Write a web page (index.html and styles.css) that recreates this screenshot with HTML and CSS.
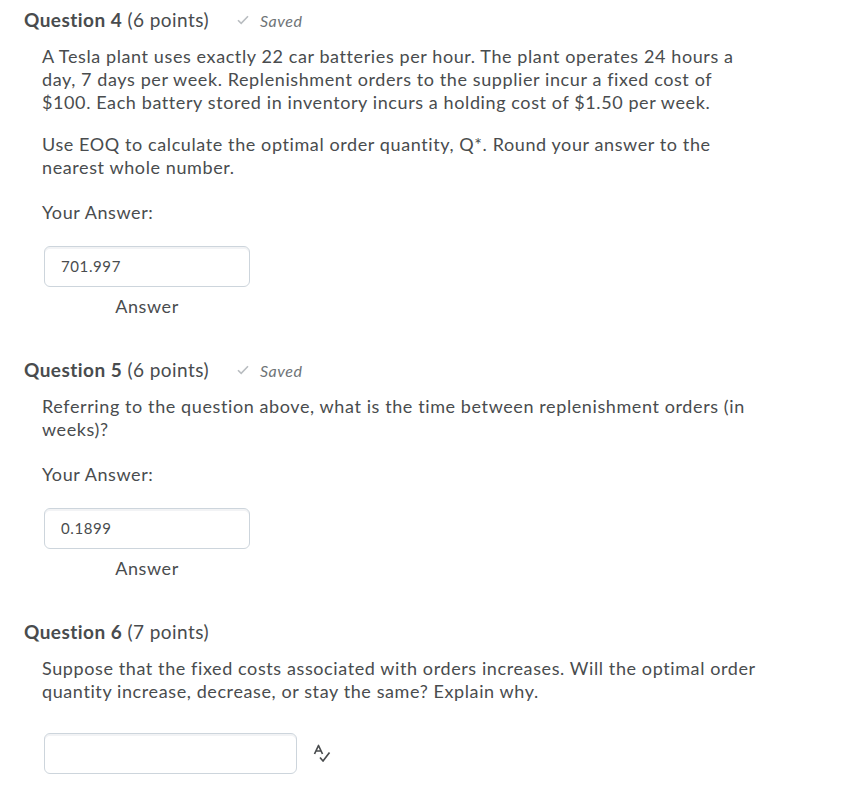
FILE: index.html
```html
<!DOCTYPE html>
<html>
<head>
<meta charset="utf-8">
<link rel="stylesheet" href="styles.css">
</head>
<body>
<div class="page">
  <section class="question">
    <div class="q-head">
      <h2 class="q-title"><strong>Question 4</strong> (6 points)</h2>
      <span class="saved"><svg class="check" viewBox="0 0 12 10" width="12" height="10"><path d="M1 5.2 L4.2 8.4 L11 1.2" fill="none" stroke="#b9bdc1" stroke-width="1.6"/></svg><em>Saved</em></span>
    </div>
    <div class="q-body">
      <p class="first">A Tesla plant uses exactly 22 car batteries per hour. The plant operates 24 hours a day, 7 days per week. Replenishment orders to the supplier incur a fixed cost of $100. Each battery stored in inventory incurs a holding cost of $1.50 per week.</p>
      <p>Use EOQ to calculate the optimal order quantity, Q*. Round your answer to the nearest whole number.</p>
      <p class="your">Your Answer:</p>
      <div class="answer-field">
        <div class="input">701.997</div>
        <div class="answer-label">Answer</div>
      </div>
    </div>
  </section>

  <section class="question">
    <div class="q-head">
      <h2 class="q-title"><strong>Question 5</strong> (6 points)</h2>
      <span class="saved"><svg class="check" viewBox="0 0 12 10" width="12" height="10"><path d="M1 5.2 L4.2 8.4 L11 1.2" fill="none" stroke="#b9bdc1" stroke-width="1.6"/></svg><em>Saved</em></span>
    </div>
    <div class="q-body">
      <p class="first">Referring to the question above, what is the time between replenishment orders (in weeks)?</p>
      <p class="your">Your Answer:</p>
      <div class="answer-field">
        <div class="input">0.1899</div>
        <div class="answer-label">Answer</div>
      </div>
    </div>
  </section>

  <section class="question">
    <div class="q-head">
      <h2 class="q-title"><strong>Question 6</strong> (7 points)</h2>
    </div>
    <div class="q-body">
      <p class="first">Suppose that the fixed costs associated with orders increases. Will the optimal order quantity increase, decrease, or stay the same? Explain why.</p>
      <div class="essay-row">
        <div class="essay"></div>
        <svg class="spell" viewBox="0 0 20 20" width="20" height="20">
          <path d="M2.5 10 L6.5 1.5 L10.5 10 M4 7 L9 7" fill="none" stroke="#494c4e" stroke-width="1.7" stroke-linejoin="round"/>
          <path d="M8 13.5 L11 17 L17.5 8.5" fill="none" stroke="#494c4e" stroke-width="1.7" stroke-linejoin="round"/>
        </svg>
      </div>
    </div>
  </section>
</div>
</body>
</html>
```

FILE: styles.css
```css
* { box-sizing: border-box; }
html, body { margin: 0; padding: 0; background: #fff; }
body {
  font-family: Lato, "Open Sans", "Liberation Sans", sans-serif;
  color: #494c4e;
}
.page {
  padding: 7px 0 0 24px;
}
.question {
  margin-bottom: 39px;
}
.q-head {
  display: flex;
  align-items: center;
  gap: 28px;
  height: 26px;
}
.q-title {
  margin: 0;
  font-size: 19px;
  font-weight: 400;
  line-height: 26px;
  letter-spacing: 0.45px;
}
.q-title strong { font-weight: 700; }
.saved {
  display: flex;
  align-items: center;
  gap: 11px;
  font-size: 16px;
  letter-spacing: 0.5px;
  color: #6e7376;
}
.saved em { font-style: italic; }
.q-body {
  padding-left: 18px;
  width: 738px;
}
.q-body p {
  margin: 19px 0 0 0;
  font-size: 18px;
  line-height: 23px;
  letter-spacing: 0.6px;
}
.q-body p.first { margin-top: 12px; }
.q-body p.your { margin-top: 22px; }
.answer-field {
  margin: 22px 0 0 2px;
  width: 206px;
  display: flex;
  flex-direction: column;
  align-items: center;
}
.input {
  width: 206px;
  height: 41px;
  border: 1px solid #cdd5dc;
  border-radius: 6px;
  padding: 0 16px;
  font-size: 15px;
  letter-spacing: 0.6px;
  line-height: 39px;
  box-shadow: inset 0 2px 0 0 #f2f3f5;
}
.answer-label {
  font-size: 18px;
  letter-spacing: 0.6px;
  line-height: 23px;
  margin-top: 8px;
}
.essay-row {
  margin: 30px 0 0 2px;
  display: flex;
  align-items: center;
  gap: 15px;
}
.essay {
  width: 253px;
  height: 41px;
  border: 1px solid #cdd5dc;
  border-radius: 6px;
  box-shadow: inset 0 2px 0 0 #f2f3f5;
}
.spell { display: block; }
```
